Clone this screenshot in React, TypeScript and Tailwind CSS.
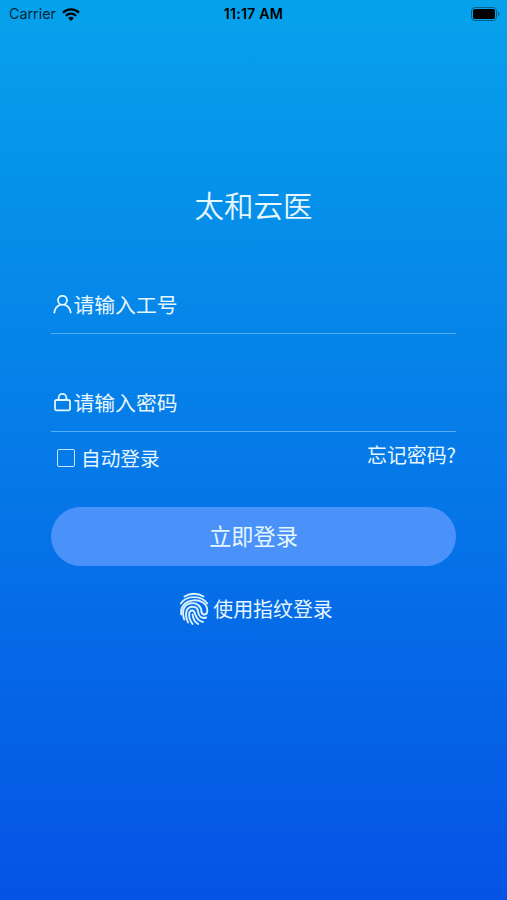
import React from 'react';

interface FieldProps {
  icon: React.ReactNode;
  placeholder: string;
}

const UserIcon = () => (
  <svg width="20" height="20" viewBox="0 0 20 20" fill="none" stroke="#e4f7ff" strokeWidth="1.8" strokeLinecap="round">
    <circle cx="10.5" cy="5.3" r="4.5" />
    <path d="M2.300 17.500c.6-4 2.700-6.600 5.800-7.700M12.900 9.800c3.100 1.100 5.200 3.700 5.800 7.700" />
  </svg>
);

const LockIcon = () => (
  <svg width="20" height="20" viewBox="0 0 20 20" fill="none" stroke="#e4f7ff" strokeWidth="1.8">
    <rect x="3" y="7" width="15" height="10.300" rx="1.800" />
    <path d="M6.600 7V4.800a3.900 3.900 0 0 1 7.800 0V7" />
  </svg>
);

const WifiIcon = () => (
  <svg width="18" height="13" viewBox="0 0 18 13" fill="none" stroke="black" strokeWidth="2.300">
    <path d="M1 4.600a11.500 11.500 0 0 1 16 0M3.900 7.700a7.300 7.300 0 0 1 10.200 0" />
    <path d="M9 13 6.200 10a4 4 0 0 1 5.600 0Z" fill="black" stroke="none" />
  </svg>
);

const FingerprintIcon = () => (
  <svg width="30" height="34" viewBox="0 0 30 34" fill="none" stroke="#d9f2ff" strokeWidth="1.9" strokeLinecap="round">
    <path d="M5.500 4.500C11 .9 19 .9 24.500 4.500" />
    <path d="M1.800 11.500C7.500 3 22.500 3 28.200 11.500" />
    <path d="M2.300 22.500C-.5 5 28.500 3.500 28.300 19c-.1 4.500-5 4.600-5.800 1" />
    <path d="M5.200 27.500C2.500 19 4.500 12.200 12 11.200c6-.8 10.500 3.300 10.500 8.800" />
    <path d="M9 30.500C4.500 20 8.500 14.800 13.500 14.800c3.300 0 5.500 2.200 5.700 5.200.3 4.500 3.800 7 8 5.500" />
    <path d="M13.500 32C8.500 25 9.500 18.500 13.300 18.500c4.500 0 .5 9 10.700 11.500" />
    <path d="M13.600 22.500c.4 4.300 2.200 7.500 5.600 9.500" />
  </svg>
);

const Field: React.FC<FieldProps> = ({ icon, placeholder }) => (
  <div className="flex h-[58px] items-center border-b-[1.500px] border-[#54aef3] pl-[1px]">
    {icon}
    <span className="ml-[1.500px] text-[20.8px] leading-none">{placeholder}</span>
  </div>
);

export default function App() {
  return (
    <div className="flex h-[900px] w-[507px] flex-col bg-linear-to-b/srgb from-[#06a2eb] to-[#0553e5] font-['Noto_Sans_CJK_SC',sans-serif] text-[#e6f7ff]">
      <header className="grid h-[28px] grid-cols-3 items-center px-[9px] font-['Inter',sans-serif] text-[14px] text-black">
        <div className="flex items-center gap-[6px] text-[14.3px] text-black/80">
          Carrier
          <WifiIcon />
        </div>
        <div className="text-center text-[14.3px] font-semibold tracking-[0.15px]">11:17 AM</div>
        <div className="-mr-[2px] flex justify-end pb-[1px]">
          <svg width="29" height="14" viewBox="0 0 29 14">
            <rect x=".5" y=".5" width="25" height="13" rx="3.500" fill="none" stroke="black" opacity=".4" />
            <rect x="2" y="2" width="22" height="10" rx="2" />
            <path d="M27 4.500v5c2-.7 2-4.300 0-5" opacity=".4" />
          </svg>
        </div>
      </header>

      <h1 className="mt-[154px] text-center text-[29.5px] font-[350] leading-[44px]">太和云医</h1>

      <main className="mt-[50px] flex flex-col px-[51px]">
        <Field icon={<UserIcon />} placeholder="请输入工号" />
        <div className="h-[40px]" />
        <Field icon={<LockIcon />} placeholder="请输入密码" />

        <div className="flex h-[50px] items-start justify-between text-[19.7px] leading-[28px]">
          <div className="flex items-center gap-[6px] pl-[6px] pt-[12px]">
            <span className="size-[18px] rounded-[2px] border-[1.5px] border-[#c4e6ff]" />
            自动登录
          </div>
          <a className="pt-[9px] text-[19.9px]">忘记密码?</a>
        </div>

        <button className="mt-[25px] h-[59px] rounded-full bg-[#4a92fa] pb-[2px] text-[22.2px]">立即登录</button>

        <div className="mt-[26px] flex items-center justify-center gap-[4px] pl-[5px] text-[19.900px] leading-[34px]">
          <FingerprintIcon />
          <span className="-mt-[1px]">使用指纹登录</span>
        </div>
      </main>
    </div>
  );
}
